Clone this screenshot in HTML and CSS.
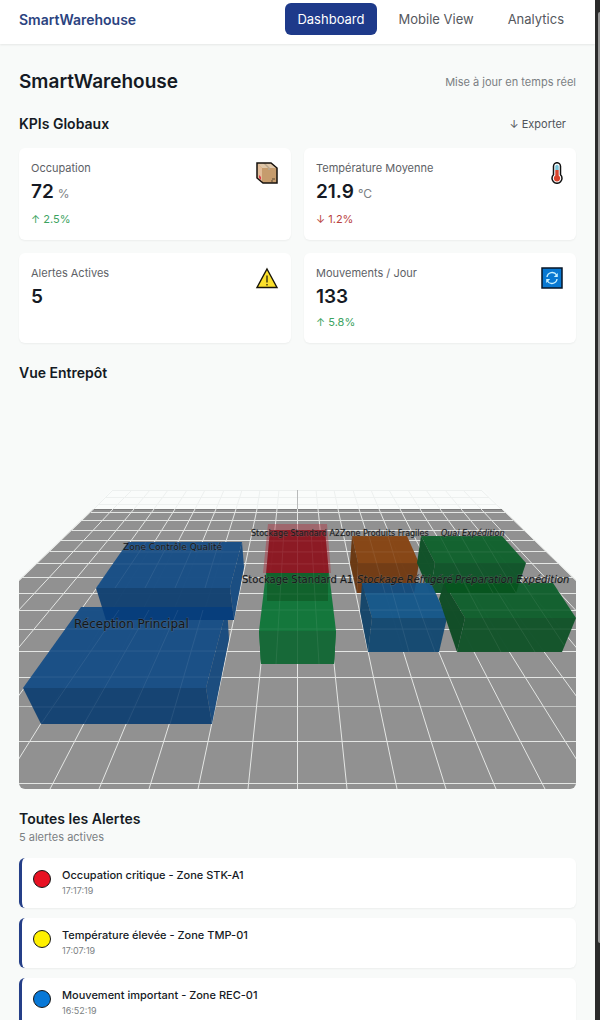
FILE: index.html
```html
<!DOCTYPE html>
<html lang="fr">
<head>
<meta charset="utf-8">
<meta name="viewport" content="width=device-width, initial-scale=1">
<title>SmartWarehouse</title>
<link rel="stylesheet" href="styles.css">
</head>
<body>
<div class="shell">
<div class="page">
  <header class="topbar">
    <a class="brand" href="#">SmartWarehouse</a>
    <nav class="nav">
      <a class="nav-link active" href="#">Dashboard</a>
      <a class="nav-link" href="#">Mobile View</a>
      <a class="nav-link" href="#">Analytics</a>
    </nav>
  </header>
  <main class="content">
    <div class="row title-row">
      <h1>SmartWarehouse</h1>
      <span class="muted">Mise à jour en temps réel</span>
    </div>
    <div class="row kpi-head">
      <h2>KPIs Globaux</h2>
      <button class="export" type="button">↓ Exporter</button>
    </div>
    <section class="kpis">
      <article class="card kpi">
        <div>
          <p class="label">Occupation</p>
          <p class="value">72<span class="unit">%</span></p>
          <p class="delta up">↑ 2.5%</p>
        </div>
        <svg class="icon" viewBox="0 0 22 22" aria-hidden="true">
          <path d="M1 1h14l6 5v15H7l-6-5z" fill="#c69c6d"/>
          <path d="M1 1h14l6 5H6z" fill="#dfc6a8"/>
          <path d="M1 1l5 5v14l-5-4z" fill="#e2bd99"/>
          <path d="M7 1h2l5 5v2h-2V6z" fill="#b9a58c"/>
          <path d="M3 13l2 2v3l-2-2z" fill="#dc3b4c"/>
          <path d="M16 17h3M15 19h2" stroke="#594631"/>
          <path d="M1 1h14l6 5v15H7l-6-5z" fill="none" stroke="#15100c" stroke-width="1.5"/>
        </svg>
      </article>
      <article class="card kpi">
        <div>
          <p class="label">Température Moyenne</p>
          <p class="value">21.9<span class="unit">°C</span></p>
          <p class="delta down">↓ 1.2%</p>
        </div>
        <svg class="icon thermo" viewBox="0 0 12 22" aria-hidden="true">
          <path d="M2.500 4.200a3.500 3.500 0 0 1 7 0v8.500a5 5 0 1 1-7 0z" fill="#fff" stroke="#111" stroke-width="1.500"/>
          <path d="M4.300 4.400a1.700 1.700 0 0 1 3.400 0V8H4.300z" fill="#79c4da"/>
          <path d="M4.300 8h3.400v5.600a3.200 3.200 0 1 1-3.400 0z" fill="#d8432c"/>
        </svg>
      </article>
      <article class="card kpi">
        <div>
          <p class="label">Alertes Actives</p>
          <p class="value">5</p>
        </div>
        <svg class="icon" viewBox="0 0 22 22" aria-hidden="true">
          <path d="M11 2L21 20.500H1z" fill="#fbe02b" stroke="#18150a" stroke-width="1.400"/>
          <path d="M11 8.500v7M11 17v1.500" stroke="#18150a" stroke-width="1.200"/>
        </svg>
      </article>
      <article class="card kpi">
        <div>
          <p class="label">Mouvements / Jour</p>
          <p class="value">133</p>
          <p class="delta up">↑ 5.8%</p>
        </div>
        <svg class="icon" viewBox="0 0 22 22" aria-hidden="true">
          <path d="M1 1h20v20H1z" fill="#0878d2" stroke="#071426" stroke-width="1.500"/>
          <path d="M6 10a5.200 5.200 0 0 1 9.600-2M16 12a5.200 5.200 0 0 1-9.600 2" fill="none" stroke="#c9f1ff" stroke-width="1.400"/>
          <path d="M16.800 6v4h-4zM5.200 16v-4h4z" fill="#c9f1ff"/>
        </svg>
      </article>
    </section>

    <h2 class="view-title">Vue Entrepôt</h2>
    <svg class="scene" viewBox="19 388 557 400" role="img" aria-label="Vue Entrepôt">
      <path d="M111 489H484L502 508H94z" fill="#fafcfb"/>
      <path d="M94 508H502L576 580V788H19V580z" fill="#919191"/>
      <path d="M94 508.500H502" stroke="#7b7b7b"/>
      <g stroke="#edf0ef">
        <path d="M113 489.500H481M106 496.500H489M99 503.500H496"/>
        <path d="M113 489L94 508M132 489L113 508M150 489L134 508M168 489L154 508M187 489L175 508M205 489L195 508M224 489L216 508M242 489L236 508M260 489L257 508M279 489L277 508M316 489L318 508M334 489L338 508M353 489L359 508M371 489L379 508M389 489L400 508M408 489L420 508M426 489L440 508M445 489L461 508M463 489L481 508M481 489L501 508"/>
      </g>
      <path d="M297.500 489V508" stroke="#b8baba"/>
      <g stroke="#e4e6e4" stroke-width="1">
        <path d="M91 511.500H505M82 519.500H513M72 529.500H524M61 539.500H535M50 550.500H546M37 562.500H559M22 576.500H573M19 592.500H576M19 609.500H576M19 628.500H576M19 650.500H576M19 676.500H576M19 740.500H576M19 782.500H576"/>
        <path d="M19 705.500H576" opacity=".6"/>
        <path d="M93 508L-198 788M113 508L-148 788M134 508L-99 788M154 508L-49 788M175 508L0 788M195 508L50 788M216 508L99 788M236 508L149 788M257 508L198 788M277 508L248 788M297.500 508V788M318 508L347 788M338 508L397 788M359 508L446 788M379 508L496 788M400 508L545 788M420 508L595 788M440 508L644 788M461 508L694 788M481 508L743 788M502 508L793 788"/>
      </g>

      <!-- Zone Contrôle Qualité -->
      <g opacity=".98">
        <path d="M128 541H242L230 587H96z" fill="#194f86"/>
        <path d="M242 541L244 566L234 619L230 587z" fill="#194d82"/>
        <path d="M96 587H230L234 619H106z" fill="#144373"/>
      </g>
      <!-- Stockage Standard A2 -->
      <path d="M268 523H327L331 572H263z" fill="#b32736" opacity=".4"/>
      <path d="M270 529H325L329 573H266z" fill="#8b1621" opacity=".95"/>
      <!-- Zone Produits Fragiles -->
      <g opacity=".98">
        <path d="M352 535H407L419 562H358z" fill="#874615"/>
        <path d="M352 535L350 562L357 592L358 562z" fill="#6b3912"/>
        <path d="M358 562H419L414 592H357z" fill="#733c14"/>
      </g>
      <!-- Quai Expédition -->
      <g opacity=".98">
        <path d="M421 535H502L526 562H435z" fill="#12632f"/>
        <path d="M421 535L417 562L430 592L435 562z" fill="#105128"/>
        <path d="M435 562H526L516 592H430z" fill="#11552b"/>
      </g>
      <!-- Stockage Standard A1 -->
      <path d="M266 572H329L336 630L334 663H261L259 630z" fill="#14773c"/>
      <path d="M267 572H328V600H267z" fill="#11622c"/>
      <path d="M259 630H336L334 663H261z" fill="#176938"/>
      <!-- Stockage Réfrigéré -->
      <g opacity=".98">
        <path d="M362 582H431L447 617H372z" fill="#17588a"/>
        <path d="M362 582L360 610L368 651L372 617z" fill="#15466b"/>
        <path d="M372 617H447L439 651H368z" fill="#154a72"/>
      </g>
      <path d="M362 582H416L414 592H365z" fill="#174d7c"/>
      <!-- Préparation Expédition -->
      <g opacity=".98">
        <path d="M444 582H553L576 617H465z" fill="#12612f"/>
        <path d="M444 582L439 598L457 651L465 617z" fill="#104d26"/>
        <path d="M465 617H576L562 651H457z" fill="#13542b"/>
      </g>
      <path d="M444 582H519L516 592H448z" fill="#07551f"/>
      <!-- Réception Principal -->
      <g opacity=".98">
        <path d="M81 606H227L206 687H23z" fill="#194f86"/>
        <path d="M227 606L229 638L212 723L206 687z" fill="#1a4c7f"/>
        <path d="M23 687H206L212 723H41z" fill="#144373"/>
      </g>
      <path d="M102 606H232L234 619H106z" fill="#073e7c"/>
      <g class="cell-lines">
        <path d="M146 541L115 587M169 541L145 587M195 541L175 587M219 541L205 587M119 609L41 723M149 609L84 723M178 609L127 723M203 609L170 723M284 529L276 663M297.500 529V663M311 529L319 663M369 535L385 592M388 535L405 592M390 582L409 651M410 582L435 651M440 535L470 592M461 535L493 592M482 535L516 592M464 582L501 651M492 582L535 651M523 582L564 644"/>
        <path d="M118 551H239M107 563H244M60 628H229M48 650H226M31 676H220M29 706H214M269 540H326M268 551H327M267 563H328M264 593H331M262 609H333M259 628H336M353 551H413M364 593H436M362 609H443M371 628H444M432 551H515M450 593H560M460 609H571M464 628H571"/>
      </g>
      <g class="zone-labels">
        <text class="far" x="123" y="549">Zone Contrôle Qualité</text>
        <text class="near" x="74" y="627">Réception Principal</text>
        <text class="slim" x="251" y="535">Stockage Standard A2</text>
        <text class="slim" x="340" y="535">Zone Produits Fragiles</text>
        <text class="slim slant" x="441" y="535">Quai Expédition</text>
        <text class="mid" x="242" y="582">Stockage Standard A1</text>
        <text class="mid slant" x="357" y="582">Stockage Réfrigéré</text>
        <text class="mid slant" x="455" y="582">Préparation Expédition</text>
      </g>
    </svg>

    <section class="alerts">
      <h2>Toutes les Alertes</h2>
      <p class="muted">5 alertes actives</p>
      <ul class="alert-list">
        <li class="card alert"><span class="dot red"></span><div><p class="alert-title">Occupation critique - Zone STK-A1</p><time>17:17:19</time></div></li>
        <li class="card alert"><span class="dot yellow"></span><div><p class="alert-title">Température élevée - Zone TMP-01</p><time>17:07:19</time></div></li>
        <li class="card alert"><span class="dot blue"></span><div><p class="alert-title">Mouvement important - Zone REC-01</p><time>16:52:19</time></div></li>
      </ul>
    </section>
  </main>
</div>
<div class="rail" aria-hidden="true"><span class="rail-arrow"></span><span class="rail-thumb"></span><span class="rail-rest"></span></div>
</div>
</body>
</html>
```
FILE: styles.css
```css
* { box-sizing: border-box; }
body, h1, h2, p, ul { margin: 0; padding: 0; }
body { font-family: Inter, "Liberation Sans", sans-serif; background: #f8faf9; color: #151a24; }
.shell { display: flex; height: 100vh; overflow: hidden; }
.page { flex: 1; min-width: 0; overflow-y: auto; scrollbar-width: none; }
.topbar {
  display: flex; justify-content: space-between; align-items: center;
  padding: 3px 19px 9px; background: #fff; box-shadow: 0 1px 2px rgba(0, 0, 0, .08);
}
.brand { color: #2b4380; font-size: 14px; font-weight: 600; text-decoration: none; }
.nav { display: flex; gap: 10px; }
.nav-link {
  padding: 0 12px; border-radius: 6px; color: #55585d;
  font-size: 13px; line-height: 32px; text-decoration: none;
}
.nav-link.active { background: #1e3a8a; color: #fff; }
.content { padding: 26px 19px; }
.row { display: flex; justify-content: space-between; align-items: center; }
h1 { font-size: 19px; line-height: 24px; font-weight: 600; }
h2 { font-size: 14px; line-height: 20px; font-weight: 600; }
.muted { color: #7b7f83; font-size: 11px; line-height: 16px; }
.kpi-head { margin-top: 18px; }
.export {
  border: 0; background: none; padding: 0 10px; color: #505459;
  font: inherit; font-size: 11px; line-height: 24px;
}
.kpis { display: grid; grid-template-columns: 1fr 1fr; gap: 13px; margin-top: 12px; }
.card { background: #fff; border-radius: 6px; box-shadow: 0 1px 2px rgba(0, 0, 0, .05); }
.kpi { display: flex; justify-content: space-between; min-height: 90px; padding: 12px; }
.label { color: #5d6166; font-size: 11px; line-height: 16px; }
.value { display: flex; align-items: baseline; gap: 4px; font-size: 19px; line-height: 32px; font-weight: 600; }
.unit { color: #7b7f83; font-size: 12px; font-weight: 400; }
.delta { font-size: 11px; line-height: 18px; }
.up { color: #3ba35f; }
.down { color: #b9433e; }
.icon { width: 24px; height: 22px; margin-top: 2px; flex: none; }
.thermo { width: 14px; }
.view-title { margin-top: 20px; }
.scene { display: block; width: 100%; height: auto; margin-top: 6px; border-radius: 6px; }
.cell-lines { fill: none; stroke: #fff; opacity: .07; }
.zone-labels { font-family: "DejaVu Sans", sans-serif; fill: #151719; stroke: #777; stroke-width: 1px; paint-order: stroke; stroke-opacity: .4; }
.far { font-size: 9px; }
.slim { font-size: 8px; }
.mid { font-size: 10px; }
.near { font-size: 12px; }
.slant { font-style: oblique; }
.alerts { margin-top: 20px; }
.alert-list { display: grid; gap: 10px; margin-top: 13px; list-style: none; }
.alert { display: flex; align-items: flex-start; gap: 11px; padding: 9px 11px; border-left: 3px solid #253f88; }
.dot { width: 18px; height: 18px; margin-top: 3px; border: 1px solid #171717; border-radius: 50%; flex: none; }
.red { background: #e81123; }
.yellow { background: #fff000; }
.blue { background: #0878d7; }
.alert-title { font-size: 11px; line-height: 16px; font-weight: 500; }
.alert time { display: block; color: #7b7f83; font-size: 9px; line-height: 16px; }
.rail { display: flex; flex-direction: column; width: 5px; padding-left: 3px; background: #2b2b2b; }
.rail-arrow { height: 12px; }
.rail-thumb { flex: 931; border-radius: 2px 0 0 2px; background: #999; }
.rail-rest { flex: 77; }
```
